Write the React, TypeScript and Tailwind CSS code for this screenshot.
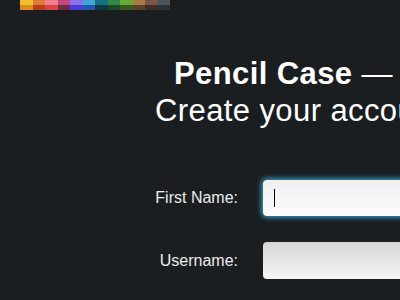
import React from 'react'

const topRow = [
  '#f2be2f', '#e07b3a', '#ef7f8a', '#c0477f', '#8b6fe6', '#3fa6d8',
  '#157080', '#2f8a46', '#68a83a', '#a57c45', '#7a5644', '#4a555d',
]
const bottomRow = [
  '#e08b1e', '#b8401e', '#d94448', '#6e2a48', '#4a3ad8', '#2357b0',
  '#0d3a44', '#1a4a28', '#375a1c', '#5a4226', '#3f2c26', '#2d3236',
]

function Swatches() {
  return (
    <div className="ml-[20px] w-[150px]">
      <div className="flex h-[5px]">
        {topRow.map((c) => (
          <div key={c} className="h-full flex-1" style={{ backgroundColor: c }} />
        ))}
      </div>
      <div className="flex h-[5px]">
        {bottomRow.map((c) => (
          <div key={c} className="h-full flex-1" style={{ backgroundColor: c }} />
        ))}
      </div>
    </div>
  )
}

function Field({ label, focused }: { label: string; focused?: boolean }) {
  return (
    <div className="flex items-center">
      <div className="w-[238px] shrink-0 text-right text-[16px] text-[#ececec]">{label}</div>
      <div
        className={
          focused
            ? 'ml-[25px] h-[36px] w-[200px] shrink-0 rounded-[4px] bg-gradient-to-b from-[#efefef] to-[#fdfdfd] shadow-[0_0_5px_2px_rgba(58,165,205,0.85)] flex items-center pl-[11px]'
            : 'ml-[25px] h-[37px] w-[200px] shrink-0 rounded-[4px] bg-gradient-to-b from-[#d6d6d6] to-[#f6f6f6] flex items-center pl-[11px]'
        }
      >
        {focused && <span className="block h-[18px] w-[1px] bg-black" />}
      </div>
    </div>
  )
}

export default function App() {
  return (
    <div className="w-[400px] h-[300px] overflow-hidden bg-[#1b1e21] font-['Liberation_Sans',Arial,sans-serif]">
      <Swatches />
      <div className="mt-[45px] whitespace-nowrap text-white text-[31px] leading-[37px] tracking-[0.4px]">
        <div className="pl-[174px]">
          <span className="font-bold">Pencil Case</span> —
        </div>
        <div className="pl-[155px]">Create your account</div>
      </div>
      <div className="mt-[51px] flex flex-col gap-[26px]">
        <Field label="First Name:" focused />
        <Field label="Username:" />
      </div>
    </div>
  )
}
